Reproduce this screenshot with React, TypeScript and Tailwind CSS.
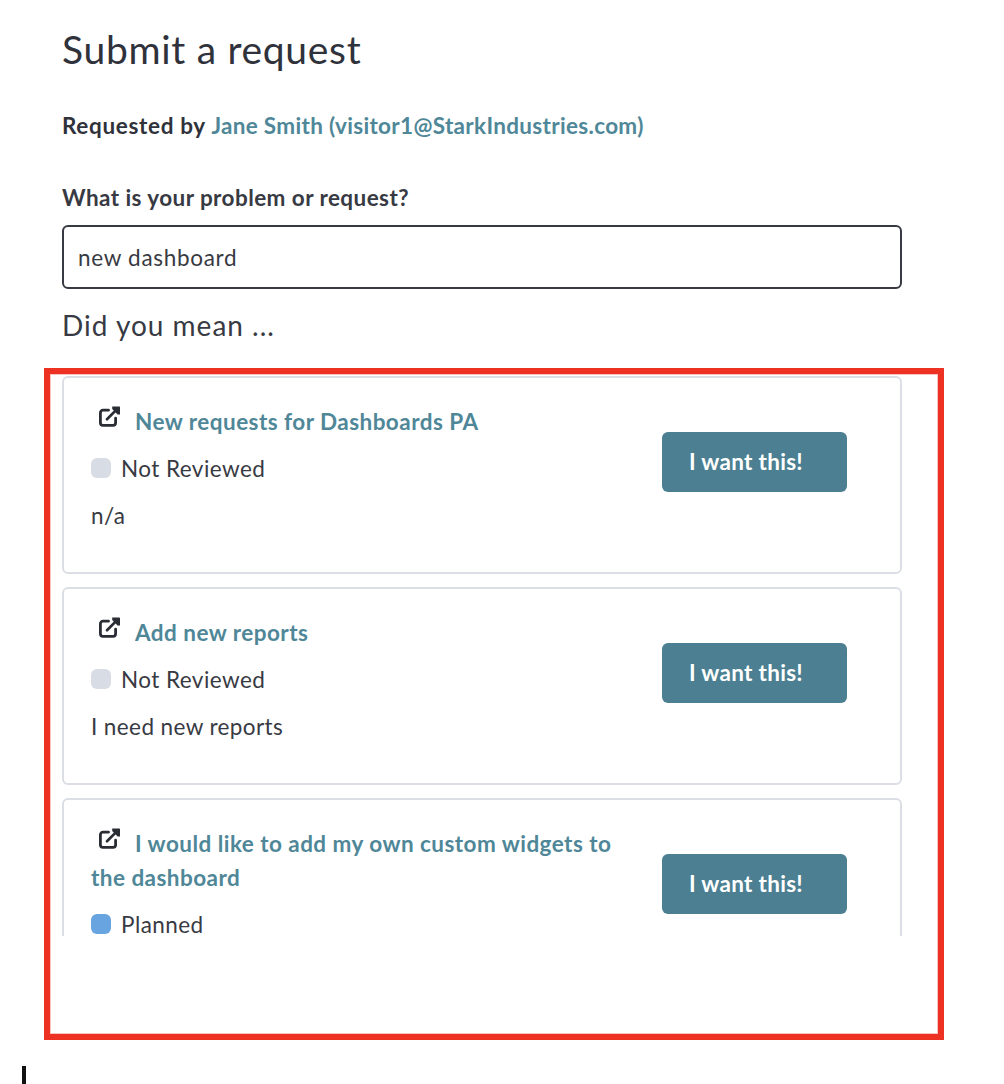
import clsx from 'clsx';

interface Idea {
  id: number;
  title: string;
  status: 'Not Reviewed' | 'Planned';
  description?: string;
}

const ideas: Idea[] = [
  { id: 1, title: 'New requests for Dashboards PA', status: 'Not Reviewed', description: 'n/a' },
  { id: 2, title: 'Add new reports', status: 'Not Reviewed', description: 'I need new reports' },
  { id: 3, title: 'I would like to add my own custom widgets to the dashboard', status: 'Planned' },
];

function ExternalIcon() {
  return (
    <svg viewBox="0 0 22 22" fill="none" className="relative -top-[2px] mr-[15px] ml-[7px] -mt-[11px] inline-block h-[22px] w-[22px] align-middle">
      <path d="M10.5 4.2H5A2.6 2.6 0 0 0 2.4 6.8v10A2.6 2.6 0 0 0 5 19.4h10a2.6 2.6 0 0 0 2.6-2.6v-4.6" stroke="#2b2d35" strokeWidth="2.8" strokeLinecap="round" />
      <path d="M9 13.2 18.8 3.4" stroke="#2b2d35" strokeWidth="2.7" strokeLinecap="round" />
      <path d="M14.2 0.6h7.2a.6.6 0 0 1 .6.6v7.4h-2.4L14.2 3z" fill="#2b2d35" />
    </svg>
  );
}

function IdeaCard({ idea }: { idea: Idea }) {
  return (
    <div className="flex min-h-[198px] w-[840px] shrink-0 items-start rounded-[6px] border-2 border-[#dcdee6] pt-[27px] pl-[27px]">
      <div className="w-[545px] leading-[34px]">
        <div className="font-bold tracking-[0.46px] text-[#4f8798]">
          <ExternalIcon />
          {idea.title}
        </div>
        <div className="mt-[13px] flex items-center">
          <span
            className={clsx(
              '-mt-[2px] mr-[10px] h-5 w-5 rounded-[6px]',
              idea.status === 'Planned' ? 'bg-[#68a4e0]' : 'bg-[#d8dce4]',
            )}
          />
          <span className="tracking-[0.44px]">{idea.status}</span>
        </div>
        {idea.description && <p className="mt-[13px] tracking-[0.4px]">{idea.description}</p>}
      </div>
      <button className="mt-[27px] ml-[26px] h-[60px] w-[185px] rounded-[6px] bg-[#4b7f91] pl-[27px] text-left font-bold tracking-[0.3px] text-white">
        I want this!
      </button>
    </div>
  );
}

export default function App() {
  return (
    <div className="flex h-[1084px] w-full flex-col overflow-hidden bg-white font-['Lato',sans-serif] text-[22.5px] text-[#383a43]">
      <div className="px-[62px]">
        <h1 className="mt-[24px] text-[39px] leading-[50px] tracking-[0.7px] text-[#30323b]">Submit a request</h1>
        <p className="mt-[35px] leading-[34px] font-bold tracking-[0.66px] text-[#30323b]">
          Requested by <a className="tracking-[0.32px] text-[#4f8798]">Jane Smith (visitor1@StarkIndustries.com)</a>
        </p>
        <label className="mt-[38px] block leading-[34px] font-bold tracking-[0.43px]">What is your problem or request?</label>
        <input
          type="text"
          defaultValue="new dashboard"
          className="mt-[10px] block h-[64px] w-[840px] rounded-[6px] border-2 border-[#383a43] px-[14px] tracking-[0.7px] outline-none"
        />
        <h2 className="mt-[18px] text-[28px] leading-[37px] tracking-[1px]">Did you mean ...</h2>
      </div>

      <div className="mt-[24px] ml-[44px] h-[672px] w-[900px] shrink-0 border-[6px] border-[#ed3123] shadow-[inset_0_0_0_1px_#f9c4bf]">
        <div className="flex h-[562px] flex-col gap-[13px] overflow-hidden pt-[2px] pl-[12px]">
          {ideas.map((idea) => (
            <IdeaCard key={idea.id} idea={idea} />
          ))}
        </div>
      </div>

      <div className="mt-[26px] ml-[22px] h-[18px] w-1 shrink-0 bg-[#111]" />
    </div>
  );
}
